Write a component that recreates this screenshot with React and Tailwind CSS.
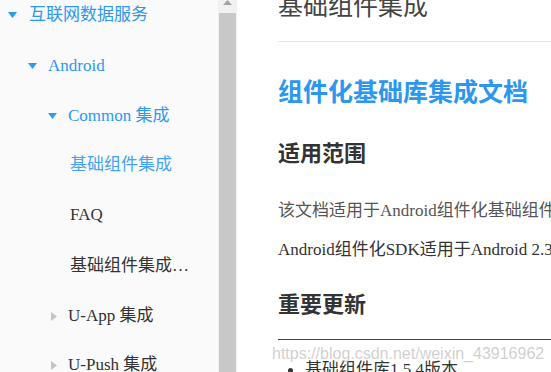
const serif = { fontFamily: '"Liberation Serif", "Noto Sans CJK SC", serif' }

function Caret({ open, gray }) {
  if (open) {
    return (
      <svg width="9" height="6" viewBox="0 0 9 6" className="shrink-0">
        <path d="M0 0 L9 0 L4.5 6 Z" fill="#2d98f0" />
      </svg>
    )
  }
  return (
    <svg width="6" height="9" viewBox="0 0 6 9" className="shrink-0">
      <path d="M0 0 L6 4.5 L0 9 Z" fill={gray ? '#c4c4c4' : '#2d98f0'} />
    </svg>
  )
}

function NavRow({ h, indent, caret, label, color }) {
  return (
    <div className={`flex items-center ${h} ${indent}`}>
      {caret}
      <span className={`whitespace-nowrap ${color}`}>{label}</span>
    </div>
  )
}

export default function App() {
  return (
    <div className="w-[551px] h-[372px] overflow-hidden flex bg-white" style={serif}>
      {/* sidebar */}
      <div className="w-[218px] shrink-0 bg-[#fafafa] overflow-hidden text-[17px]">
        <div className="-mt-[11px]">
          <NavRow h="h-[52px]" indent="pl-[8px] gap-[12px]" caret={<Caret open />} label="互联网数据服务" color="text-[#2d98f0]" />
          <NavRow h="h-[50px]" indent="pl-[28px] gap-[11px]" caret={<Caret open />} label="Android" color="text-[#2d98f0]" />
          <NavRow h="h-[50px]" indent="pl-[48px] gap-[11px]" caret={<Caret open />} label="Common 集成" color="text-[#2d98f0]" />
          <div className="h-[48px] flex items-center pl-[70px] text-[#42a2f4]">基础组件集成</div>
          <div className="h-[52px] flex items-center pl-[70px] text-[#333]">FAQ</div>
          <div className="h-[50px] flex items-center pl-[70px] text-[#333] whitespace-nowrap">基础组件集成…</div>
          <NavRow h="h-[50px]" indent="pl-[51px] gap-[11px]" caret={<Caret gray />} label="U-App 集成" color="text-[#333]" />
          <NavRow h="h-[48px]" indent="pl-[51px] gap-[11px]" caret={<Caret gray />} label="U-Push 集成" color="text-[#333]" />
        </div>
      </div>

      {/* scrollbar */}
      <div className="w-[19px] shrink-0 bg-[#f1f1f1] flex flex-col items-center">
        <div className="h-[13px] flex items-start justify-center">
          <svg width="9" height="5" viewBox="0 0 9 5">
            <path d="M0 5 L4.5 0 L9 5 Z" fill="#a3a3a3" />
          </svg>
        </div>
        <div className="w-[17px] flex-1 bg-[#c8c8c8]" />
      </div>

      {/* content */}
      <div className="flex-1 overflow-hidden pl-[41px] relative">
        <div className="-mt-[8px] h-[50px] border-b border-[#e8e8e8] text-[25px] leading-[30px] text-[#444] whitespace-nowrap">
          基础组件集成
        </div>
        <div className="mt-[36px] text-[25px] leading-[30px] font-bold text-[#2b97ee] whitespace-nowrap">
          组件化基础库集成文档
        </div>
        <div className="mt-[32px] text-[22px] leading-[28px] font-bold text-[#333] whitespace-nowrap">
          适用范围
        </div>
        <div className="mt-[31px] text-[17px] leading-[24px] text-[#555] whitespace-nowrap">
          该文档适用于Android组件化基础组件集成
        </div>
        <div className="mt-[15px] text-[17px] leading-[24px] text-[#333] whitespace-nowrap">
          Android组件化SDK适用于Android 2.3及以上版本
        </div>
        <div className="mt-[29px] text-[22px] leading-[28px] font-bold text-[#333] whitespace-nowrap">
          重要更新
        </div>
        <div className="mt-[20px] border-t border-[#444]" />
        <div className="mt-[18px] flex items-center gap-[12px] pl-[10px] text-[17px] leading-[24px] text-[#333] whitespace-nowrap">
          <span className="w-[5px] h-[5px] rounded-full bg-[#333]" />
          基础组件库1.5.4版本
        </div>
        <div
          className="absolute left-[35px] top-[344px] text-[16px] leading-[20px] text-[#c4c4c4]/80 whitespace-nowrap"
          style={{ fontFamily: '"Liberation Sans", Arial, sans-serif' }}
        >
          https://blog.csdn.net/weixin_43916962
        </div>
      </div>
    </div>
  )
}
